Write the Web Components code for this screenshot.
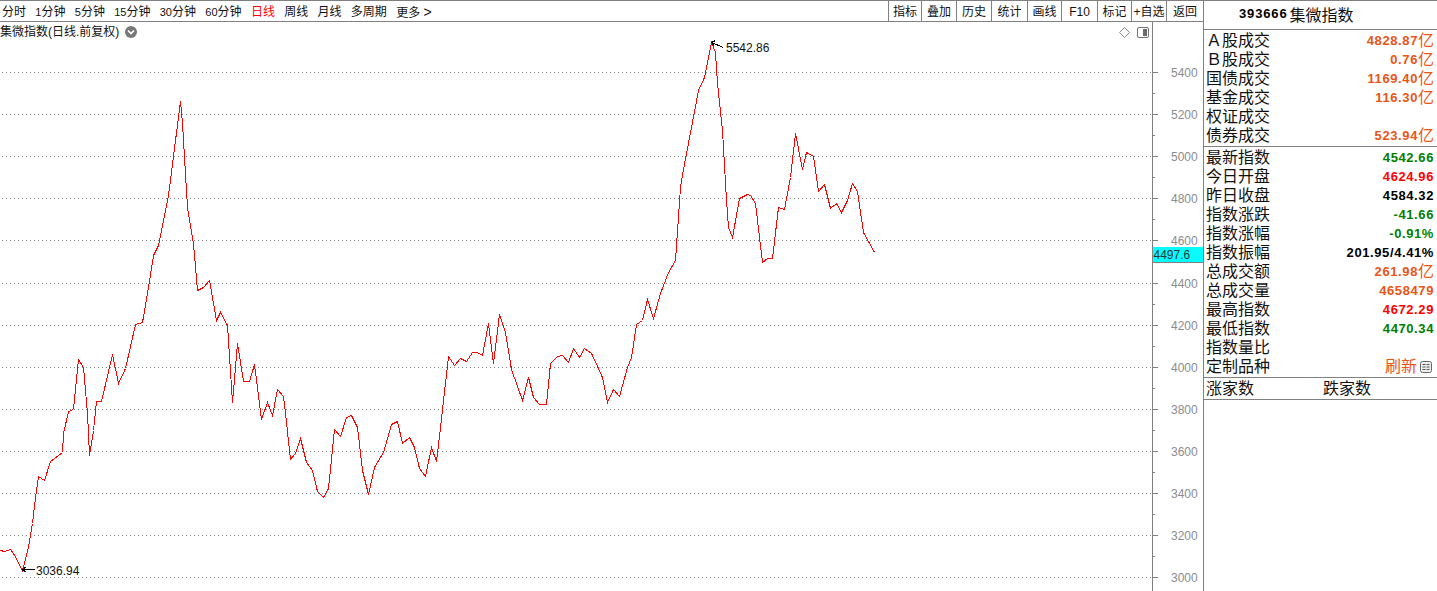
<!DOCTYPE html>
<html lang="zh">
<head>
<meta charset="utf-8">
<title>集微指数</title>
<style>
  html, body { margin: 0; padding: 0; background: #fff; overflow: hidden; }
  body { font: 12px "Liberation Sans", "Noto Sans CJK SC", sans-serif; color: #000; }
</style>
</head>
<body>
<quote-app>
  <chart-toolbar slot="toolbar">
    <tool-tab>分时</tool-tab>
    <tool-tab><span>1</span>分钟</tool-tab>
    <tool-tab><span>5</span>分钟</tool-tab>
    <tool-tab><span>15</span>分钟</tool-tab>
    <tool-tab><span>30</span>分钟</tool-tab>
    <tool-tab><span>60</span>分钟</tool-tab>
    <tool-tab active>日线</tool-tab>
    <tool-tab>周线</tool-tab>
    <tool-tab>月线</tool-tab>
    <tool-tab>多周期</tool-tab>
    <tool-tab>更多 <i>&gt;</i></tool-tab>
    <tool-button slot="actions">指标</tool-button>
    <tool-button slot="actions">叠加</tool-button>
    <tool-button slot="actions">历史</tool-button>
    <tool-button slot="actions">统计</tool-button>
    <tool-button slot="actions">画线</tool-button>
    <tool-button slot="actions">F10</tool-button>
    <tool-button slot="actions">标记</tool-button>
    <tool-button slot="actions">+自选</tool-button>
    <tool-button slot="actions">返回</tool-button>
  </chart-toolbar>
  <kline-chart slot="chart"></kline-chart>
  <quote-panel slot="panel">
    <quote-section>
      <quote-row label="Ａ股成交" value="4828.87" unit="亿" tone="amount"></quote-row>
      <quote-row label="Ｂ股成交" value="0.76" unit="亿" tone="amount"></quote-row>
      <quote-row label="国债成交" value="1169.40" unit="亿" tone="amount"></quote-row>
      <quote-row label="基金成交" value="116.30" unit="亿" tone="amount"></quote-row>
      <quote-row label="权证成交"></quote-row>
      <quote-row label="债券成交" value="523.94" unit="亿" tone="amount"></quote-row>
    </quote-section>
    <quote-section>
      <quote-row label="最新指数" value="4542.66" tone="down"></quote-row>
      <quote-row label="今日开盘" value="4624.96" tone="up"></quote-row>
      <quote-row label="昨日收盘" value="4584.32"></quote-row>
      <quote-row label="指数涨跌" value="-41.66" tone="down"></quote-row>
      <quote-row label="指数涨幅" value="-0.91%" tone="down"></quote-row>
      <quote-row label="指数振幅" value="201.95/4.41%"></quote-row>
      <quote-row label="总成交额" value="261.98" unit="亿" tone="amount"></quote-row>
      <quote-row label="总成交量" value="4658479" tone="amount"></quote-row>
      <quote-row label="最高指数" value="4672.29" tone="up"></quote-row>
      <quote-row label="最低指数" value="4470.34" tone="down"></quote-row>
      <quote-row label="指数量比"></quote-row>
      <quote-row label="定制品种" refresh></quote-row>
    </quote-section>
    <breadth-row></breadth-row>
  </quote-panel>
</quote-app>

<script>
(function() {
    'use strict';

    const LINE = '#808080';

    const CJK = '"Liberation Sans", "Noto Sans CJK SC", sans-serif';

    // Daily index line, read off the picture in page coordinates
    const SERIES = [
        [0,550],[4,551],[10,549],[13,553],[22,570],[28,547],[32,523],[35,497],[38,476],[44,480],
        [50,461],[62,452],[63,433],[68,411],[73,409],[78,359],[83,367],[87,413],[89,455],[93,430],
        [96,401],[101,401],[112,354],[118,383],[125,368],[135,324],[142,322],[148,287],[153,255],[158,245],
        [168,195],[175,140],[180,101],[182,123],[184,157],[187,207],[193,243],[197,290],[203,287],[209,280],
        [216,320],[220,312],[227,325],[232,402],[237,343],[243,381],[249,381],[254,364],[261,419],[267,402],
        [272,415],[277,389],[283,396],[285,413],[290,459],[295,453],[300,438],[306,462],[312,470],[317,491],
        [323,497],[328,488],[334,429],[340,436],[346,417],[351,415],[357,427],[362,470],[368,494],[374,467],
        [383,452],[391,424],[397,421],[402,443],[409,437],[414,447],[419,468],[425,476],[431,447],[436,461],
        [440,427],[448,356],[454,365],[460,358],[466,361],[472,352],[477,352],[482,355],[488,323],[493,363],
        [499,314],[505,332],[511,369],[522,400],[528,377],[533,397],[539,404],[546,404],[550,363],[557,356],
        [562,355],[568,362],[573,348],[579,357],[584,348],[591,353],[598,368],[602,377],[607,402],[613,389],
        [619,396],[627,367],[631,357],[636,324],[642,320],[647,299],[653,318],[660,293],[668,272],[675,260],
        [680,187],[682,174],[698,90],[704,77],[711,42],[715,52],[717,83],[722,130],[726,200],[728,227],
        [732,237],[739,198],[747,194],[750,195],[755,203],[762,262],[767,258],[772,258],[778,207],[784,209],
        [790,177],[795,133],[802,169],[806,152],[813,156],[818,191],[824,184],[830,208],[836,203],[841,212],
        [847,200],[852,183],[857,191],[863,232],[874,252]
    ];

    // Axis labels, 200 points apart
    const AXIS = [
        [5400,72],[5200,114],[5000,156],[4800,198],[4600,240],[4400,283],[4200,325],
        [4000,367],[3800,409],[3600,451],[3400,493],[3200,535],[3000,577]
    ];

    function buildChart() {
        let grid = '';
        let labels = '';
        AXIS.forEach(([value, y], i) => {
            grid += `<line class="grid" x1="2" x2="1152" y1="${y + .5}" y2="${y + .5}"/>`;
            grid += `<line class="axis" x1="1152" x2="1158" y1="${y + .5}" y2="${y + .5}"/>`;
            // minor tick half way to the next label
            const minor = y + 21;
            if (i < AXIS.length - 1) {
                grid += `<line class="axis" x1="1152" x2="1155" y1="${minor + .5}" y2="${minor + .5}"/>`;
            }
            labels += `<text class="label" x="1171" y="${y + 5}">${value}</text>`;
        });
        const points = SERIES.map(p => `${p[0] + .5},${p[1] + .5}`).join(' ');
        return `
        <svg width="1203" height="569" viewBox="0 22 1203 569">
            ${grid}
            <line class="axis" x1="1152.5" x2="1152.5" y1="22" y2="591"/>
            ${labels}
            <polyline class="price" points="${points}"/>
            <path class="mark" d="M711.5 42.5L723.5 47.5M711.5 42.5L715.5 40.5M711.5 42.5L714.5 46.5"/>
            <text class="note" x="726" y="52">5542.86</text>
            <path class="mark" d="M22.5 569.5H34.5M22.5 569.5L26.5 566.5M22.5 569.5L26.5 572.5"/>
            <rect x="22" y="569" width="2" height="2" fill="#000"/>
            <text class="note" x="36" y="575">3036.94</text>
            <rect x="1153" y="247" width="50" height="15" fill="#00ffff"/>
            <line class="axis" x1="1153" x2="1203" y1="262.5" y2="262.5"/>
            <text class="tag" x="1153.5" y="259">4497.6</text>
        </svg>`;
    }

    class QuoteApp extends HTMLElement {
        constructor() {
            super();
            this.attachShadow({ mode: 'open' }).innerHTML = `
            <style>
                :host { display: block; width: 1437px; height: 591px; box-sizing: border-box; border-top: 1px solid ${LINE}; overflow: hidden; }
                .frame { display: grid; grid-template-columns: 1203px 234px; height: 590px; }
                .main { display: flex; flex-direction: column; min-width: 0; }
            </style>
            <div class="frame">
                <div class="main">
                    <slot name="toolbar"></slot>
                    <slot name="chart"></slot>
                </div>
                <slot name="panel"></slot>
            </div>`;
        }
    }

    class ChartToolbar extends HTMLElement {
        constructor() {
            super();
            this.attachShadow({ mode: 'open' }).innerHTML = `
            <style>
                :host { display: flex; justify-content: space-between; height: 20px; border-bottom: 1px solid ${LINE}; box-sizing: content-box; }
                .tabs { display: flex; gap: 9.3px; padding-left: 2px; }
                .actions { display: grid; grid-template-columns: 33px 35px 35px 36px 34px 36px 34px 35px 37px; width: 315px; }
            </style>
            <div class="tabs"><slot></slot></div>
            <div class="actions"><slot name="actions"></slot></div>`;
        }
    }

    class ToolTab extends HTMLElement {
        constructor() {
            super();
            this.attachShadow({ mode: 'open' }).innerHTML = `
            <style>
                :host { display: block; height: 20px; font: 12px/22px ${CJK}; white-space: nowrap; color: #111; }
                :host([active]) { color: #f00; }
                ::slotted(span) { font-size: 11px; }
                ::slotted(i) { font-style: normal; font-size: 14px; }
            </style>
            <slot></slot>`;
        }
    }

    class ToolButton extends HTMLElement {
        constructor() {
            super();
            this.attachShadow({ mode: 'open' }).innerHTML = `
            <style>
                :host { display: block; height: 20px; box-sizing: border-box; border-left: 1px solid ${LINE}; text-align: center; font: 12px/22px ${CJK}; white-space: nowrap; color: #111; }
            </style>
            <slot></slot>`;
        }
    }

    class KlineChart extends HTMLElement {
        constructor() {
            super();
            this.attachShadow({ mode: 'open' }).innerHTML = `
            <style>
                :host { display: block; position: relative; width: 1203px; height: 569px; }
                svg { display: block; }
                .grid { stroke: ${LINE}; stroke-dasharray: 1 3; shape-rendering: crispEdges; }
                .axis { stroke: ${LINE}; shape-rendering: crispEdges; }
                .price { fill: none; stroke: #f00; stroke-width: 1; shape-rendering: crispEdges; }
                .mark { fill: none; stroke: #000; stroke-width: 1; shape-rendering: crispEdges; }
                text { font: 12px "Liberation Sans", sans-serif; }
                .label { fill: #8c8c8c; }
                .note { fill: #111; }
                .tag { fill: #333; }
                .title { position: absolute; left: 0; top: 1px; height: 18px; display: flex; align-items: center; gap: 6px; font: 12px/18px ${CJK}; color: #111; white-space: nowrap; }
                .title svg { flex: none; }
                .tools { position: absolute; left: 1119px; top: 5px; display: flex; gap: 7px; }
            </style>
            ${buildChart()}
            <div class="title">
                <span>集微指数(日线.前复权)</span>
                <svg width="12" height="12" viewBox="0 0 12 12"><circle cx="6" cy="6" r="6" fill="#777"/><path d="M3 4.5L6 7.5L9 4.5" fill="none" stroke="#fff" stroke-width="1.6"/></svg>
            </div>
            <div class="tools">
                <svg width="11" height="11" viewBox="0 0 11 11"><path d="M5.5 .5L10.5 5.5L5.5 10.5L.5 5.5Z" fill="#fff" stroke="#8a8a8a"/></svg>
                <svg width="12" height="11" viewBox="0 0 12 11"><rect x=".5" y=".5" width="11" height="10" rx="1.5" fill="#fff" stroke="#707070"/><rect x="6" y="2" width="4" height="7" fill="#6a6a6a"/></svg>
            </div>`;
        }
    }

    class QuotePanel extends HTMLElement {
        constructor() {
            super();
            this.attachShadow({ mode: 'open' }).innerHTML = `
            <style>
                :host { display: block; box-sizing: border-box; width: 234px; height: 590px; border-left: 1px solid ${LINE}; }
                .head { height: 29px; box-sizing: border-box; border-bottom: 1px solid ${LINE}; display: flex; align-items: center; padding: 0 0 3px 35px; gap: 2px; white-space: nowrap; }
                .code { font: bold 13px "Liberation Sans", sans-serif; letter-spacing: .85px; }
                .name { font: 16px ${CJK}; color: #111; }
            </style>
            <div class="head"><span class="code">393666</span><span class="name">集微指数</span></div>
            <slot></slot>`;
        }
    }

    class QuoteSection extends HTMLElement {
        constructor() {
            super();
            this.attachShadow({ mode: 'open' }).innerHTML = `
            <style>
                :host { display: block; padding: 0 0 2px; border-bottom: 1px solid ${LINE}; }
            </style>
            <slot></slot>`;
        }
    }

    class QuoteRow extends HTMLElement {
        constructor() {
            super();
            const label = this.getAttribute('label') || '';
            const value = this.getAttribute('value') || '';
            const unit = this.getAttribute('unit') || '';
            const refresh = this.hasAttribute('refresh') ? `
                <span class="value"><span class="unit">刷新</span>
                <svg width="12" height="12" viewBox="0 0 12 12"><rect x=".5" y=".5" width="11" height="11" rx="2" fill="#eee" stroke="#666"/><path d="M2.5 3.5H5.5M6.5 3.5H9.5M2.5 6H5.5M6.5 6H9.5M2.5 8.5H5.5M6.5 8.5H9.5" stroke="#555"/></svg></span>` : '';
            this.attachShadow({ mode: 'open' }).innerHTML = `
            <style>
                :host { display: flex; box-sizing: border-box; justify-content: space-between; align-items: center; height: 19px; padding: 2px 3px 0 2px; white-space: nowrap; color: #000; }
                :host([tone="amount"]) .value { color: #ea5514; }
                :host([tone="up"]) .value { color: #f00; }
                :host([tone="down"]) .value { color: #008000; }
                .label { font: 16px/19px ${CJK}; color: #111; }
                .value { display: flex; align-items: center; font: bold 13px/19px "Liberation Sans", sans-serif; letter-spacing: .6px; }
                .unit { font: 16px/19px ${CJK}; letter-spacing: 0; color: #ea5514; }
                svg { margin: 0 2px 0 3px; }
            </style>
            <span class="label">${label}</span>
            ${refresh || `<span class="value">${value}${unit ? `<span class="unit">${unit}</span>` : ''}</span>`}`;
        }
    }

    class BreadthRow extends HTMLElement {
        constructor() {
            super();
            this.attachShadow({ mode: 'open' }).innerHTML = `
            <style>
                :host { display: grid; grid-template-columns: 117px auto; height: 21px; padding-left: 2px; border-bottom: 1px solid ${LINE}; font: 16px/21px ${CJK}; color: #111; }
            </style>
            <span>涨家数</span><span>跌家数</span>`;
        }
    }

    customElements.define('quote-app', QuoteApp);
    customElements.define('chart-toolbar', ChartToolbar);
    customElements.define('tool-tab', ToolTab);
    customElements.define('tool-button', ToolButton);
    customElements.define('kline-chart', KlineChart);
    customElements.define('quote-panel', QuotePanel);
    customElements.define('quote-section', QuoteSection);
    customElements.define('quote-row', QuoteRow);
    customElements.define('breadth-row', BreadthRow);
})();
</script>
</body>
</html>
